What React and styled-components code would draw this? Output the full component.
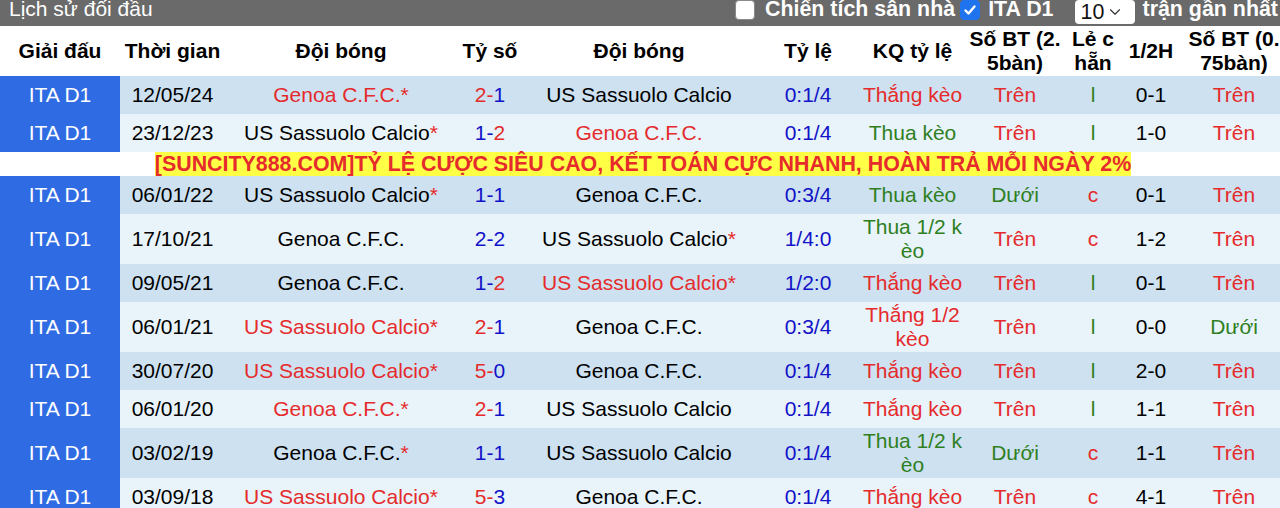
import React from 'react'
import styled, { createGlobalStyle } from 'styled-components'
import { ChevronDown } from 'lucide-react'

const RED = '#e52b2b'
const BLUE = '#1212c8'
const GREEN = '#2f7f1f'

const Global = createGlobalStyle`
  html, body { margin: 0; padding: 0; background: #fff; overflow: hidden; }
  body { font-family: "Liberation Sans", Arial, sans-serif; }
`

const rows = [
  { date: '12/05/24', home: 'Genoa C.F.C.', homeStar: true, away: 'US Sassuolo Calcio', awayStar: false, score: [2, 1], hc: '0:1/4', kq: 'Thắng kèo', ou: 'Trên', oe: 'l', ht: '0-1', ou2: 'Trên' },
  { date: '23/12/23', home: 'US Sassuolo Calcio', homeStar: true, away: 'Genoa C.F.C.', awayStar: false, score: [1, 2], hc: '0:1/4', kq: 'Thua kèo', ou: 'Trên', oe: 'l', ht: '1-0', ou2: 'Trên' },
  'ad',
  { date: '06/01/22', home: 'US Sassuolo Calcio', homeStar: true, away: 'Genoa C.F.C.', awayStar: false, score: [1, 1], hc: '0:3/4', kq: 'Thua kèo', ou: 'Dưới', oe: 'c', ht: '0-1', ou2: 'Trên' },
  { date: '17/10/21', home: 'Genoa C.F.C.', homeStar: false, away: 'US Sassuolo Calcio', awayStar: true, score: [2, 2], hc: '1/4:0', kq: 'Thua 1/2 kèo', ou: 'Trên', oe: 'c', ht: '1-2', ou2: 'Trên' },
  { date: '09/05/21', home: 'Genoa C.F.C.', homeStar: false, away: 'US Sassuolo Calcio', awayStar: true, score: [1, 2], hc: '1/2:0', kq: 'Thắng kèo', ou: 'Trên', oe: 'l', ht: '0-1', ou2: 'Trên' },
  { date: '06/01/21', home: 'US Sassuolo Calcio', homeStar: true, away: 'Genoa C.F.C.', awayStar: false, score: [2, 1], hc: '0:3/4', kq: 'Thắng 1/2 kèo', ou: 'Trên', oe: 'l', ht: '0-0', ou2: 'Dưới' },
  { date: '30/07/20', home: 'US Sassuolo Calcio', homeStar: true, away: 'Genoa C.F.C.', awayStar: false, score: [5, 0], hc: '0:1/4', kq: 'Thắng kèo', ou: 'Trên', oe: 'l', ht: '2-0', ou2: 'Trên' },
  { date: '06/01/20', home: 'Genoa C.F.C.', homeStar: true, away: 'US Sassuolo Calcio', awayStar: false, score: [2, 1], hc: '0:1/4', kq: 'Thắng kèo', ou: 'Trên', oe: 'l', ht: '1-1', ou2: 'Trên' },
  { date: '03/02/19', home: 'Genoa C.F.C.', homeStar: true, away: 'US Sassuolo Calcio', awayStar: false, score: [1, 1], hc: '0:1/4', kq: 'Thua 1/2 kèo', ou: 'Dưới', oe: 'c', ht: '1-1', ou2: 'Trên' },
  { date: '03/09/18', home: 'US Sassuolo Calcio', homeStar: true, away: 'Genoa C.F.C.', awayStar: false, score: [5, 3], hc: '0:1/4', kq: 'Thắng kèo', ou: 'Trên', oe: 'c', ht: '4-1', ou2: 'Trên' },
]

const widths = [120, 105, 232, 66, 232, 106, 103, 102, 54, 62, 104]

const Wrap = styled.div`
  width: 1286px;
`

const TitleBar = styled.div`
  height: 26px;
  background: #6a6a6a;
  color: #fff;
  display: flex;
  justify-content: space-between;
  align-items: flex-start;
  padding: 0 2px 0 9px;
  width: 1280px;
  box-sizing: border-box;
`

const Title = styled.div`
  font-size: 21px;
  line-height: 18px;
`

const Controls = styled.div`
  display: flex;
  align-items: flex-start;
  font-size: 21.4px;
  font-weight: bold;
  line-height: 19px;
`

const Box = styled.span`
  width: 20px;
  height: 20px;
  box-sizing: border-box;
  border-radius: 4px;
  margin: 0 ${p => p.$gap || 8}px 0 0;
  display: inline-flex;
  align-items: center;
  justify-content: center;
  background: ${p => (p.$checked ? '#1f74ee' : '#fff')};
  border: 1px solid ${p => (p.$checked ? '#1f74ee' : '#8a8a8a')};
`

const Label = styled.span`
  margin-right: ${p => p.$gap || 0}px;
`

const Select = styled.span`
  background: #fff;
  color: #111;
  font-weight: normal;
  width: 60px;
  height: 24px;
  border-radius: 4px;
  margin-right: 8px;
  display: inline-flex;
  align-items: center;
  padding-left: 6px;
  box-sizing: border-box;
  gap: 2px;
`

const Table = styled.table`
  border-collapse: collapse;
  table-layout: fixed;
  width: 1286px;
  font-size: 21px;
`

const Th = styled.th`
  height: 50px;
  padding: 0 1px;
  font-weight: bold;
  line-height: 24px;
  color: #000;
  text-align: center;
  word-break: break-all;
  background: #fff;
`

const Tr = styled.tr`
  background: ${p => (p.$alt ? '#e8f3fa' : '#cde1f1')};
`

const Td = styled.td`
  height: 36px;
  padding: 1px;
  line-height: 24px;
  text-align: center;
  word-break: break-all;
  color: ${p => p.$color || '#000'};
`

const League = styled(Td)`
  background: #2f6be2;
  color: #fff;
`

const Star = styled.span`
  color: ${RED};
`

const AdCell = styled.td`
  height: 23px;
  padding: 0;
  line-height: 23px;
  text-align: center;
  background: #fff;
`

const AdText = styled.span`
  background: #ffff45;
  color: ${RED};
  font-weight: bold;
  font-size: 21.4px;
`

const Check = () => (
  <svg width="14" height="14" viewBox="0 0 14 14">
    <path d="M2.5 7.5 L5.5 10.5 L11.5 3.5" fill="none" stroke="#fff" strokeWidth="2.4" strokeLinecap="round" strokeLinejoin="round" />
  </svg>
)

const Team = ({ name, star, win }) => (
  <Td $color={win ? RED : '#000'}>
    {name}
    {star && <Star>*</Star>}
  </Td>
)

const Score = ({ score }) => {
  const [a, b] = score
  return (
    <Td $color={BLUE}>
      <span style={{ color: a > b ? RED : BLUE }}>{a}-</span>
      <span style={{ color: b > a ? RED : BLUE }}>{b}</span>
    </Td>
  )
}

export default function App() {
  let n = 0
  return (
    <Wrap>
      <Global />
      <TitleBar>
        <Title>Lịch sử đối đầu</Title>
        <Controls>
          <Box $gap={10} />
          <Label $gap={5}>Chiến tích sân nhà</Label>
          <Box $checked>
            <Check />
          </Box>
          <Label $gap={21}>ITA D1</Label>
          <Select>
            10 <ChevronDown size={18} strokeWidth={1.5} color="#333" />
          </Select>
          <Label>trận gần nhất</Label>
        </Controls>
      </TitleBar>
      <Table>
        <colgroup>
          {widths.map((w, i) => (
            <col key={i} style={{ width: w }} />
          ))}
        </colgroup>
        <thead>
          <tr>
            <Th>Giải đấu</Th>
            <Th>Thời gian</Th>
            <Th>Đội bóng</Th>
            <Th>Tỷ số</Th>
            <Th>Đội bóng</Th>
            <Th>Tỷ lệ</Th>
            <Th>KQ tỷ lệ</Th>
            <Th>Số BT (2.5bàn)</Th>
            <Th>Lẻ chẵn</Th>
            <Th>1/2H</Th>
            <Th>Số BT (0.75bàn)</Th>
          </tr>
        </thead>
        <tbody>
          {rows.map((r, i) => {
            if (r === 'ad') {
              return (
                <tr key={i}>
                  <AdCell colSpan={11}>
                    <AdText>[SUNCITY888.COM]TỶ LỆ CƯỢC SIÊU CAO, KẾT TOÁN CỰC NHANH, HOÀN TRẢ MỖI NGÀY 2%</AdText>
                  </AdCell>
                </tr>
              )
            }
            const alt = n++ % 2 === 1
            const [a, b] = r.score
            return (
              <Tr key={i} $alt={alt}>
                <League>ITA D1</League>
                <Td>{r.date}</Td>
                <Team name={r.home} star={r.homeStar} win={a > b} />
                <Score score={r.score} />
                <Team name={r.away} star={r.awayStar} win={b > a} />
                <Td $color={BLUE}>{r.hc}</Td>
                <Td $color={r.kq.startsWith('Thắng') ? RED : GREEN}>{r.kq}</Td>
                <Td $color={r.ou === 'Trên' ? RED : GREEN}>{r.ou}</Td>
                <Td $color={r.oe === 'c' ? RED : GREEN}>{r.oe}</Td>
                <Td>{r.ht}</Td>
                <Td $color={r.ou2 === 'Trên' ? RED : GREEN}>{r.ou2}</Td>
              </Tr>
            )
          })}
        </tbody>
      </Table>
    </Wrap>
  )
}
